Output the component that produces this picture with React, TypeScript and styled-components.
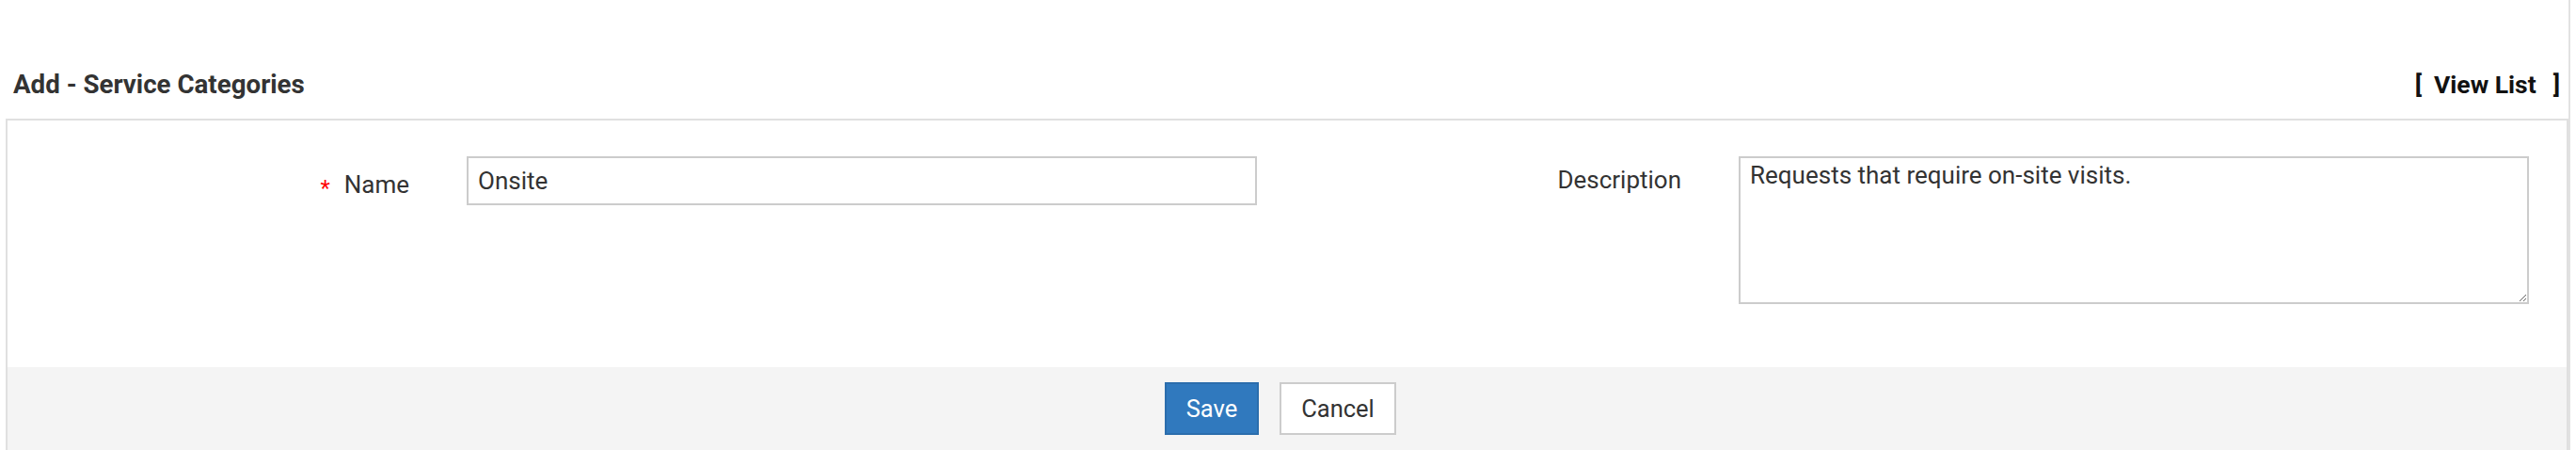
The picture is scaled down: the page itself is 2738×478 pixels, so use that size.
import React from "react";
import styled, { createGlobalStyle } from "styled-components";

const Global = createGlobalStyle`
  html, body { margin: 0; padding: 0; background: #fff; }
  body { font-family: Roboto, "Liberation Sans", Arial, sans-serif; color: #333; }
`;

const Page = styled.div`
  width: 2732px;
  min-height: 478px;
  box-sizing: border-box;
  border-right: 2px solid #e2e2e2;
`;

const Header = styled.div`
  height: 126px;
  box-sizing: border-box;
  padding: 74px 9px 0 14px;
  display: flex;
  justify-content: space-between;
  align-items: flex-start;
`;

const Title = styled.h1`
  margin: 0;
  font-size: 27.7px;
  line-height: 32px;
  font-weight: 700;
  color: #333;
`;

const ViewList = styled.div`
  display: flex;
  font-size: 26.5px;
  line-height: 32px;
  font-weight: 700;
  color: #111;
`;

const Bracket = styled.span<{ $gap: number; $side: "left" | "right" }>`
  ${(p) => (p.$side === "left" ? `margin-right: ${p.$gap}px;` : `margin-left: ${p.$gap}px;`)}
`;

const Panel = styled.div`
  margin-left: 6px;
  width: 2724px;
  box-sizing: border-box;
  border: 2px solid #e0e0e0;
  border-bottom: none;
`;

const FormBody = styled.div`
  height: 262px;
  box-sizing: border-box;
  padding-top: 38px;
  display: flex;
  gap: 24px;
`;

const FieldGroup = styled.div`
  display: grid;
  grid-template-columns: 427px 840px;
  column-gap: 61px;
  align-items: start;
`;

const Label = styled.label<{ $offset: number }>`
  display: flex;
  justify-content: flex-end;
  align-items: center;
  padding-top: ${(p) => p.$offset}px;
  font-size: 26px;
  line-height: 30px;
  color: #333;
`;

const Required = styled.span`
  color: #ff0000;
  font-size: 24px;
  margin-right: 15px;
  line-height: 1;
  transform: translateY(4px);
`;

const TextInput = styled.input`
  width: 840px;
  height: 52px;
  box-sizing: border-box;
  border: 2px solid #cccccc;
  padding: 0 10px;
  font-family: Roboto, "Liberation Sans", Arial, sans-serif;
  font-size: 26px;
  color: #333;
  outline: none;
`;

const TextArea = styled.textarea`
  width: 840px;
  height: 157px;
  box-sizing: border-box;
  border: 2px solid #cccccc;
  padding: 3px 10px;
  font-family: Roboto, "Liberation Sans", Arial, sans-serif;
  font-size: 26px;
  line-height: 30px;
  color: #333;
  outline: none;
  resize: both;
  display: block;
  margin: 0;
`;

const Footer = styled.div`
  background: #f4f4f4;
  height: 90px;
  box-sizing: border-box;
  padding: 16px 14px 0 0;
  display: flex;
  justify-content: center;
  align-items: flex-start;
  gap: 22px;
`;

const Button = styled.button<{ $primary?: boolean }>`
  height: 56px;
  width: ${(p) => (p.$primary ? "100px" : "124px")};
  box-sizing: border-box;
  padding: 0;
  font-family: Roboto, "Liberation Sans", Arial, sans-serif;
  font-size: 25.5px;
  border: 2px solid ${(p) => (p.$primary ? "#2b6dac" : "#cccccc")};
  background: ${(p) => (p.$primary ? "#3079be" : "#ffffff")};
  color: ${(p) => (p.$primary ? "#ffffff" : "#333333")};
  cursor: pointer;
`;

export default function App() {
  return (
    <Page>
      <Global />
      <Header>
        <Title>Add - Service Categories</Title>
        <ViewList>
          <Bracket $side="left" $gap={13}>[</Bracket>
          <span>View List</span>
          <Bracket $side="right" $gap={18}>]</Bracket>
        </ViewList>
      </Header>
      <Panel>
        <FormBody>
          <FieldGroup>
            <Label $offset={15}>
              <Required>*</Required>Name
            </Label>
            <TextInput defaultValue="Onsite" />
          </FieldGroup>
          <FieldGroup>
            <Label $offset={10}>Description</Label>
            <TextArea defaultValue="Requests that require on-site visits." />
          </FieldGroup>
        </FormBody>
        <Footer>
          <Button $primary>Save</Button>
          <Button>Cancel</Button>
        </Footer>
      </Panel>
    </Page>
  );
}
